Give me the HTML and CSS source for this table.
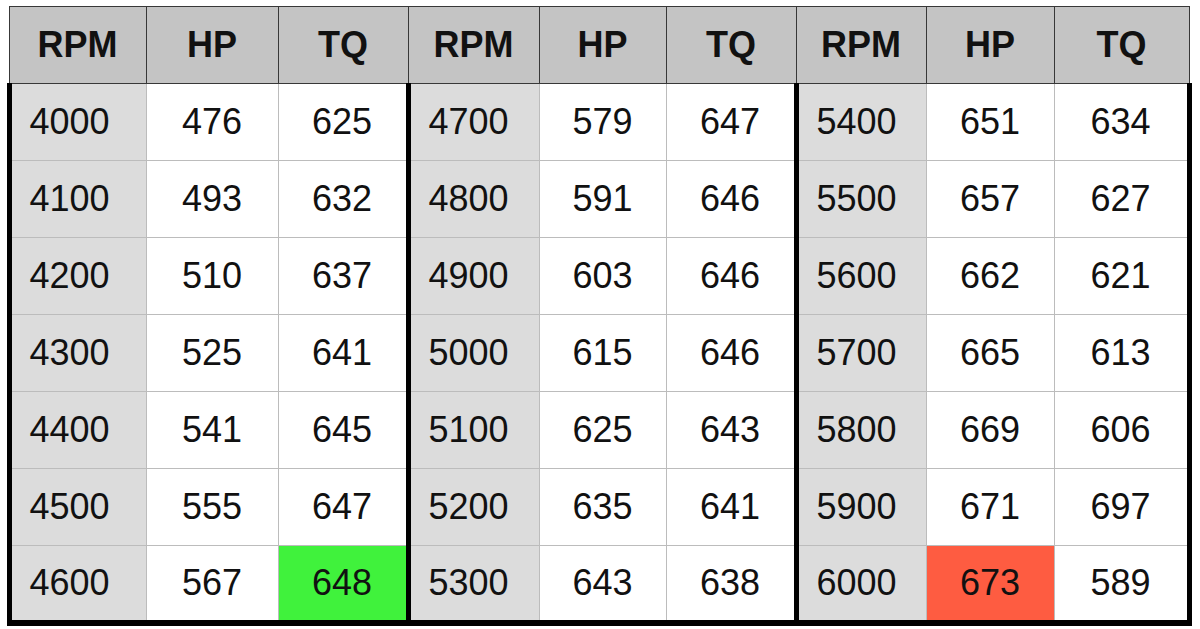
FILE: index.html
```html
<!DOCTYPE html>
<html lang="en">
<head>
<meta charset="utf-8">
<title>Dyno results</title>
<link rel="stylesheet" href="styles.css">
</head>
<body>
<table class="dyno">
  <colgroup>
    <col class="c1"><col class="c2"><col class="c3">
    <col class="c4"><col class="c5"><col class="c6">
    <col class="c7"><col class="c8"><col class="c9">
  </colgroup>
  <thead>
    <tr><th>RPM</th><th>HP</th><th>TQ</th><th>RPM</th><th>HP</th><th>TQ</th><th>RPM</th><th>HP</th><th>TQ</th></tr>
  </thead>
  <tbody>
    <tr><td class="rpm">4000</td><td>476</td><td>625</td><td class="rpm">4700</td><td>579</td><td>647</td><td class="rpm">5400</td><td>651</td><td class="last">634</td></tr>
    <tr><td class="rpm">4100</td><td>493</td><td>632</td><td class="rpm">4800</td><td>591</td><td>646</td><td class="rpm">5500</td><td>657</td><td class="last">627</td></tr>
    <tr><td class="rpm">4200</td><td>510</td><td>637</td><td class="rpm">4900</td><td>603</td><td>646</td><td class="rpm">5600</td><td>662</td><td class="last">621</td></tr>
    <tr><td class="rpm">4300</td><td>525</td><td>641</td><td class="rpm">5000</td><td>615</td><td>646</td><td class="rpm">5700</td><td>665</td><td class="last">613</td></tr>
    <tr><td class="rpm">4400</td><td>541</td><td>645</td><td class="rpm">5100</td><td>625</td><td>643</td><td class="rpm">5800</td><td>669</td><td class="last">606</td></tr>
    <tr><td class="rpm">4500</td><td>555</td><td>647</td><td class="rpm">5200</td><td>635</td><td>641</td><td class="rpm">5900</td><td>671</td><td class="last">697</td></tr>
    <tr><td class="rpm">4600</td><td>567</td><td class="best-tq">648</td><td class="rpm">5300</td><td>643</td><td>638</td><td class="rpm">6000</td><td class="best-hp">673</td><td class="last">589</td></tr>
  </tbody>
</table>
</body>
</html>
```

FILE: styles.css
```css
html, body {
  margin: 0;
  padding: 0;
  background: #ffffff;
}

.dyno {
  border-collapse: collapse;
  table-layout: fixed;
  width: 1181px;
  margin: 6px 0 0 6.5px;
  font-family: "Liberation Sans", Arial, Helvetica, sans-serif;
  color: #111111;
}

.c1 { width: 137px; }
.c2 { width: 132px; }
.c3 { width: 130px; }
.c4 { width: 131px; }
.c5 { width: 127px; }
.c6 { width: 130px; }
.c7 { width: 130px; }
.c8 { width: 128px; }
.c9 { width: 135px; }

.dyno tr {
  height: 77px;
}

.dyno th {
  background: #c4c4c4;
  border: 1px solid #383838;
  font-size: 36px;
  font-weight: bold;
  text-align: center;
  padding: 0;
}

.dyno td {
  background: #ffffff;
  border: 1px solid #bcbcbc;
  font-size: 36px;
  text-align: center;
  padding: 0;
}

.dyno td.rpm {
  background: #dcdcdc;
  text-align: left;
  padding-left: 18px;
  border-left: 5px solid #000000;
}

.dyno td.last {
  border-right: 5px solid #000000;
}

.dyno tbody tr:last-child td {
  border-bottom: 6px solid #000000;
}

.dyno td.best-tq {
  background: #40f23c;
}

.dyno td.best-hp {
  background: #fe5c41;
}
```
